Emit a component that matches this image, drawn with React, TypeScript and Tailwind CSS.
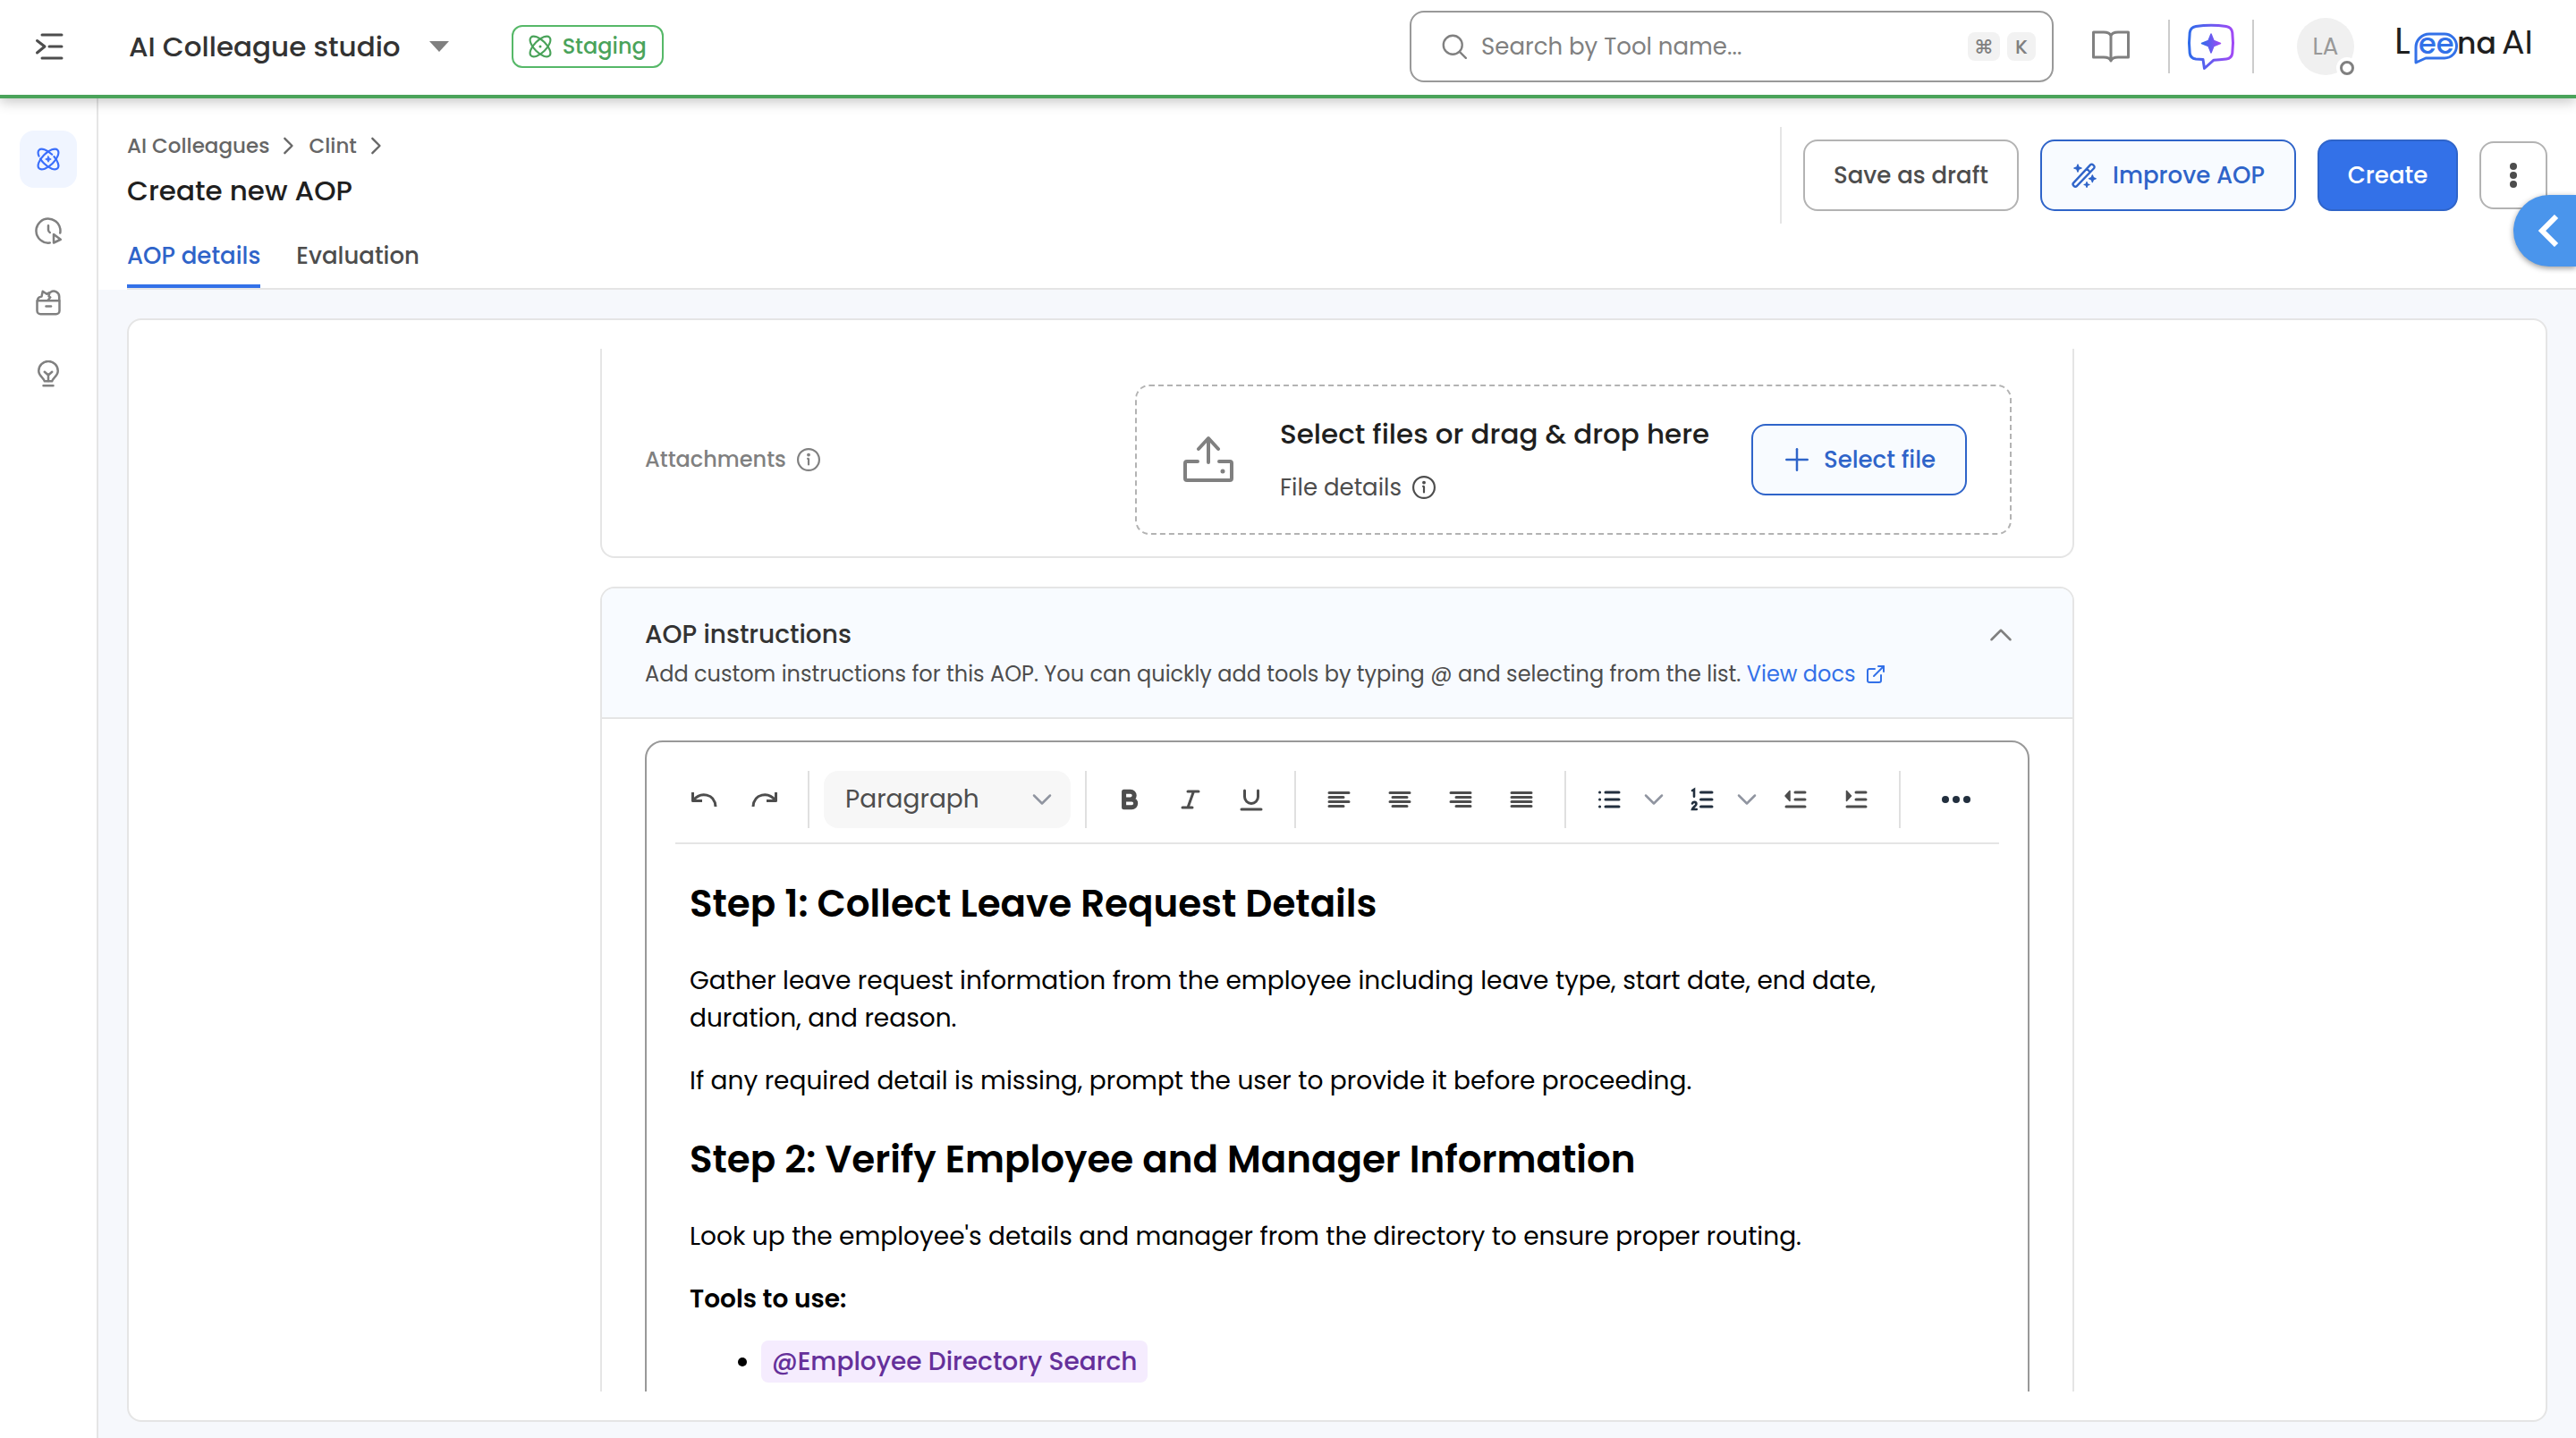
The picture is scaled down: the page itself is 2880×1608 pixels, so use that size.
import type { ReactNode } from 'react';
import { ExternalLink, Plus } from 'lucide-react';

type IconProps = { className?: string };

function Stroke({ className, width = 2, children }: IconProps & { width?: number; children: ReactNode }) {
  return (
    <svg
      className={className}
      viewBox="0 0 24 24"
      fill="none"
      stroke="currentColor"
      strokeWidth={width}
      strokeLinecap="round"
      strokeLinejoin="round"
      aria-hidden="true"
    >
      {children}
    </svg>
  );
}

function AtomIcon({ className, spark }: IconProps & { spark?: boolean }) {
  return (
    <Stroke className={className} width={2}>
      <ellipse cx="12" cy="12" rx="13.5" ry="6.2" transform="rotate(45 12 12)" strokeDasharray={spark ? '22 3' : undefined} />
      <ellipse cx="12" cy="12" rx="13.5" ry="6.2" transform="rotate(-45 12 12)" />
      {spark ? (
        <path d="M12 9l1 2 2 1-2 1-1 2-1-2-2-1 2-1z" fill="currentColor" strokeWidth="0.8" />
      ) : (
        <circle cx="12" cy="12" r="1.4" fill="currentColor" stroke="none" />
      )}
    </Stroke>
  );
}

function HistoryIcon({ className }: IconProps) {
  return (
    <Stroke className={className}>
      <path d="M22.6 14A10.8 10.8 0 1 0 13.4 22.8" />
      <path d="M12 7.4v3.8a3 3 0 0 0 1.4 2.4" />
      <path d="M16.8 15.2v7.6l6.2-3z" />
    </Stroke>
  );
}

function ToolboxIcon({ className }: IconProps) {
  return (
    <Stroke className={className}>
      <path d="M2 10.5h20v9a3 3 0 0 1-3 3H5a3 3 0 0 1-3-3z" />
      <path d="M10 15.5h4.4" />
      <path d="M2.4 10.2c.2-2.4 1.4-3 3.6-3.4l1-4.6 3.6 2.4 2.6-1.2-.8 3.2 1.4 1-2.2 2.6" />
      <path d="M14 3a5 5 0 0 1 7.8 4.2v3" />
    </Stroke>
  );
}

function IdeaIcon({ className }: IconProps) {
  return (
    <Stroke className={className}>
      <path d="M8.6 18.6c0-2.6-5.2-4.4-5.2-9.2a8.6 8.6 0 0 1 17.2 0c0 4.8-5.2 6.6-5.2 9.2z" />
      <path d="M12 18.4v-5.6M8.6 10.2l3.4 3 3.4-3M7.6 22.6h8.8" />
    </Stroke>
  );
}

function ChevronIcon({ className, d, width = 2 }: IconProps & { d: string; width?: number }) {
  return (
    <Stroke className={className} width={width}>
      <path d={d} />
    </Stroke>
  );
}

const right = 'M8 5l7 7-7 7';
const down = 'M3 7.5l9 9 9-9';
const up = 'M3 16.5l9-9 9 9';

function InfoIcon({ className }: IconProps) {
  return (
    <Stroke className={className} width={2}>
      <circle cx="12" cy="12" r="11" />
      <path d="M11.2 11c1.2 0 .8 1 .8 2.4V17" />
      <circle cx="12" cy="7" r="0.8" fill="currentColor" />
    </Stroke>
  );
}

function WandIcon({ className }: IconProps) {
  return (
    <Stroke className={className} width={2}>
      <path d="M1.8 19.4L18 2a1.8 1.8 0 0 1 2.6 0l.8.8a1.8 1.8 0 0 1 0 2.6L5 22.4a1.8 1.8 0 0 1-2.6 0l-.6-.6a1.8 1.8 0 0 1 0-2.4zM14.6 5.6l3.2 3.4" />
      <path
        d="M6 1.6l1 2.6 2.6 1L7 6.2l-1 2.6-1-2.6-2.6-1 2.6-1zM20 11.8l1 2.4 2.4 1-2.4 1-1 2.4-1-2.4-2.4-1 2.4-1zM14.6 18.4l.7 1.9 1.9.7-1.9.7-.7 1.9-.7-1.9-1.9-.7 1.9-.7z"
        fill="currentColor"
        strokeWidth="1"
      />
    </Stroke>
  );
}

function UploadIcon({ className }: IconProps) {
  return (
    <svg className={className} viewBox="0 0 60 54" fill="none" stroke="currentColor" strokeWidth="4" strokeLinecap="round" strokeLinejoin="round" aria-hidden="true">
      <path d="M18 29H6a2 2 0 0 0-2 2v17a2 2 0 0 0 2 2h48a2 2 0 0 0 2-2V31a2 2 0 0 0-2-2H42" />
      <path d="M30 30V4M19 15L30 3l11 12" />
      <circle cx="46" cy="40" r="1.5" fill="currentColor" strokeWidth="2" />
    </svg>
  );
}

function ChatSparkIcon({ className }: IconProps) {
  return (
    <svg className={className} viewBox="0 0 56 54" fill="none" aria-hidden="true">
      <defs>
        <linearGradient id="chat-spark" x1="0" y1="0" x2="1" y2="0">
          <stop offset="0" stopColor="#2f6bea" />
          <stop offset="1" stopColor="#a04af5" />
        </linearGradient>
      </defs>
      <path
        d="M11 4.5C22 2.8 34 2.8 45 4.5c4 .7 6.3 3 6.8 7 1 8 1 15 0 23-.5 4-2.8 6-6.8 6.5-5 .6-9 1-14 1.2L20.5 51.5l-1.500-10-8-.5c-4-.5-6.300-2.500-6.800-6.500-1-8-1-15 0-23 .5-4 2.800-6.300 6.800-7z"
        stroke="url(#chat-spark)"
        strokeWidth="3"
        strokeLinejoin="round"
      />
      <path d="M28 13l3 7.5 7.5 3-7.5 3L28 34l-3-7.5-7.5-3 7.5-3z" fill="url(#chat-spark)" stroke="url(#chat-spark)" strokeWidth="1.5" strokeLinejoin="round" />
    </svg>
  );
}

function BookIcon({ className }: IconProps) {
  return (
    <svg className={className} viewBox="0 0 44 38" fill="none" stroke="currentColor" strokeWidth="3" strokeLinejoin="round" aria-hidden="true">
      <path d="M22 7C21 4 18 3 14 3H2.5v28H14c4 0 7 1 8 4 1-3 4-4 8-4h11.5V3H30c-4 0-7 1-8 4zM22 7v28" />
    </svg>
  );
}

function Logo() {
  return (
    <svg className="h-[72px] w-[158px] overflow-visible" viewBox="0 0 158 72" role="img" aria-label="Leena AI" fontFamily="Poppins, Inter, sans-serif">
      <text x="1" y="44" fontSize="41" fontWeight="400" fill="#1f1f1f">L</text>
      <path d="M25 54V37a15 15 0 0 1 15-15h17a13 13 0 0 1 0 27H36z" fill="none" stroke="#3371e8" strokeWidth="3" strokeLinejoin="round" />
      <text x="28" y="44" fontSize="32" fontWeight="500" fill="#3371e8">ee</text>
      <text x="71" y="44" fontSize="33" fontWeight="500" fill="#1f1f1f">na</text>
      <text x="121" y="44" fontSize="38" fontWeight="400" fill="#1f1f1f">AI</text>
    </svg>
  );
}

function Header() {
  return (
    <header className="relative z-10 flex h-[110px] shrink-0 items-center border-b-4 border-[#4aa35a] bg-white pr-[46px] pb-0.5 shadow-[0_3px_14px_rgba(0,0,0,0.25)]">
      <button type="button" aria-label="Expand menu" className="flex w-[110px] shrink-0 justify-center text-[#4d4d4d]">
        <svg className="h-8 w-8" viewBox="0 0 32 32" fill="none" stroke="currentColor" strokeWidth="3" strokeLinecap="round" strokeLinejoin="round" aria-hidden="true">
          <path d="M8 3h22M16 16h14M8 29h22M2.5 9.5L11 16l-8.5 7" />
        </svg>
      </button>
      <button type="button" className="ml-[34px] flex items-center gap-8 text-[31px] font-medium text-[#333]">
        AI Colleague studio
        <svg className="h-3 w-[22px] text-[#808080]" viewBox="0 0 22 12" fill="currentColor" aria-hidden="true">
          <path d="M0 0h22L11 12z" />
        </svg>
      </button>
      <div className="ml-[70px] flex h-12 items-center gap-3 rounded-xl border-2 border-[#56b868] px-[17px] text-2xl font-medium text-[#4aa35a]">
        <AtomIcon className="size-[26px] overflow-visible" />
        Staging
      </div>

      <label className="ml-auto flex h-20 w-[720px] items-center gap-4 rounded-2xl border-2 border-[#999] pr-[18px] pl-[34px]">
        <Stroke className="size-7 text-[#808080]">
          <circle cx="10.5" cy="10.5" r="9" />
          <path d="M17 17l6 6" />
        </Stroke>
        <input
          type="search"
          aria-label="Search tools"
          placeholder="Search by Tool name..."
          className="min-w-0 flex-1 text-[26px] outline-none placeholder:text-[#808080]"
        />
        <span className="flex gap-2 text-[22px] font-medium text-[#808080]">
          <kbd className="flex h-8 w-9 items-center justify-center rounded-lg bg-[#f2f2f2] font-[Inter,sans-serif]">⌘</kbd>
          <kbd className="flex h-8 w-8 items-center justify-center rounded-lg bg-[#f2f2f2] font-[Poppins,Inter,sans-serif]">K</kbd>
        </span>
      </label>

      <button type="button" aria-label="Documentation" className="ml-[42px] text-[#808080]">
        <BookIcon className="h-[38px] w-11" />
      </button>
      <div className="ml-[42px] flex h-[60px] items-center border-x-2 border-[#ccc] px-[18px]">
        <button type="button" aria-label="Assistant">
          <ChatSparkIcon className="h-[54px] w-14" />
        </button>
      </div>
      <button type="button" aria-label="Account" className="relative ml-12 flex size-16 items-center justify-center rounded-full bg-[#f0f0f0] text-[26px] text-[#999]">
        LA
        <span className="absolute -right-1 -bottom-1 size-6 rounded-full border-4 border-white bg-white">
          <span className="block size-4 rounded-full border-[3px] border-[#808080]" />
        </span>
      </button>
      <div className="ml-11">
        <Logo />
      </div>
    </header>
  );
}

const navItems = [
  { label: 'AI Colleagues', icon: <AtomIcon spark className="size-[26px] overflow-visible" /> },
  { label: 'Runs', icon: <HistoryIcon className="size-[30px]" /> },
  { label: 'Tools', icon: <ToolboxIcon className="size-[30px]" /> },
  { label: 'Insights', icon: <IdeaIcon className="size-[30px]" /> },
];

function Sidebar() {
  return (
    <nav className="flex w-[110px] shrink-0 flex-col items-center gap-4 border-r-2 border-[#e5e5e5] bg-white pt-9">
      {navItems.map((item, index) => (
        <a
          key={item.label}
          href="#"
          aria-label={item.label}
          className={`flex size-16 items-center justify-center rounded-2xl ${index === 0 ? 'bg-[#f0f5ff] text-[#3b6ffb]' : 'text-[#808080]'}`}
        >
          {item.icon}
        </a>
      ))}
    </nav>
  );
}

function PageHeader() {
  return (
    <div className="bg-white pl-8">
      <div className="flex h-[214px] items-start border-b-2 border-[#e5e5e5] pr-8">
        <div className="flex h-full flex-col pt-9">
          <div className="flex h-[34px] items-center text-[23px] font-medium text-[#666]">
            <a href="#">AI Colleagues</a>
            <ChevronIcon className="mx-2 size-7" d={right} />
            <a href="#">Clint</a>
            <ChevronIcon className="mx-2 size-7" d={right} />
          </div>
          <h1 className="mt-2 text-[31px] leading-[50px] font-medium text-[#1f1f1f]">Create new AOP</h1>
          <div className="mt-auto flex gap-10 text-[26px] leading-[40px] font-medium">
            <button type="button" className="border-b-4 border-[#3371e8] pb-3 text-[#2f64c9]">AOP details</button>
            <button type="button" className="border-b-4 border-transparent pb-3 text-[#4d4d4d]">Evaluation</button>
          </div>
        </div>

        <div className="mt-8 ml-auto flex h-[108px] items-center gap-6 border-l-2 border-[#e5e5e5] pl-6 text-[26px] font-medium whitespace-nowrap">
          <button type="button" className="h-20 w-[241px] rounded-2xl border-2 border-[#b3b3b3] text-[#4d4d4d]">Save as draft</button>
          <button type="button" className="flex h-20 w-[286px] items-center justify-center gap-[18px] rounded-2xl border-2 border-[#2f64c9] bg-[#f8fbff] text-[#2f64c9]">
            <WandIcon className="size-7" />
            Improve AOP
          </button>
          <button type="button" className="h-20 w-[157px] rounded-2xl border-2 border-[#2f64c9] bg-[#3371e8] text-white">Create</button>
          <button type="button" aria-label="More actions" className="flex size-[76px] items-center justify-center rounded-2xl border-2 border-[#b3b3b3] text-[#4d4d4d]">
            <svg className="h-7 w-2" viewBox="0 0 8 28" fill="currentColor" aria-hidden="true">
              <circle cx="4" cy="4" r="4" />
              <circle cx="4" cy="14" r="4" />
              <circle cx="4" cy="24" r="4" />
            </svg>
          </button>
        </div>
      </div>
    </div>
  );
}

function AttachmentsCard() {
  return (
    <section className="flex shrink-0 items-center justify-between rounded-b-2xl border-x-2 border-b-2 border-[#e5e5e5] pt-10 pr-[68px] pb-6 pl-12">
      <div className="flex items-center gap-3 text-2xl font-medium text-[#808080]">
        Attachments
        <InfoIcon className="size-[26px]" />
      </div>
      <div className="flex h-[168px] w-[980px] items-center rounded-2xl border-2 border-dashed border-[#b3b3b3] pr-12 pl-[50px]">
        <UploadIcon className="h-[54px] w-[60px] text-[#808080]" />
        <div className="ml-[50px]">
          <div className="text-[31px] leading-[46px] font-medium text-[#1f1f1f]">Select files or drag &amp; drop here</div>
          <div className="mt-4 flex items-center gap-3 text-[26px] leading-[42px] text-[#4d4d4d]">
            File details
            <InfoIcon className="size-[26px]" />
          </div>
        </div>
        <button type="button" className="ml-auto flex h-20 w-[241px] items-center justify-center gap-2.5 rounded-2xl border-2 border-[#2f64c9] bg-[#f8fbff] pr-1 text-[26px] font-medium text-[#2f64c9]">
          <Plus className="size-10" strokeWidth={1.5} />
          Select file
        </button>
      </div>
    </section>
  );
}

function ToolButton({ label, dark, children }: { label: string; dark?: boolean; children: ReactNode }) {
  return (
    <button type="button" aria-label={label} className={`flex h-16 w-[68px] items-center justify-center ${dark ? 'text-[#222f3e]' : 'text-[#4d4d4d]'}`}>
      {children}
    </button>
  );
}

function MenuArrow({ label }: { label: string }) {
  return (
    <button type="button" aria-label={label} className="flex h-16 w-9 items-center justify-center pr-1 text-[#9095a0]">
      <ChevronIcon className="size-6" d={down} width={2.5} />
    </button>
  );
}

function Lines({ d, children }: { d: string; children?: ReactNode }) {
  return (
    <svg className="h-7 w-[26px]" viewBox="0 0 26 28" fill="none" stroke="currentColor" strokeWidth="3" strokeLinecap="round" aria-hidden="true">
      <path d={d} />
      {children}
    </svg>
  );
}

function Toolbar() {
  const divider = <div className="h-16 w-0.5 shrink-0 bg-[#e0e0e0]" />;

  return (
    <div className="flex items-center gap-[14px] border-b-2 border-[#e5e5e5] pb-4">
      <div className="-ml-0.5 flex">
        <ToolButton label="Undo">
          <svg className="h-4 w-[30px]" viewBox="0 0 30 16" fill="none" stroke="currentColor" strokeWidth="3" strokeLinejoin="round" aria-hidden="true">
            <path d="M2.5 0v9.5H13M3 9C11-1 27 1 28 16" />
          </svg>
        </ToolButton>
        <ToolButton label="Redo">
          <svg className="h-4 w-[30px]" viewBox="0 0 30 16" fill="none" stroke="currentColor" strokeWidth="3" strokeLinejoin="round" aria-hidden="true">
            <path d="M27.5 0v9.5H17M27 9C19-1 3 1 2 16" />
          </svg>
        </ToolButton>
      </div>
      {divider}
      <div className="relative mx-0.5">
        <select aria-label="Block format" className="h-16 w-[276px] appearance-none rounded-2xl bg-[#f7f7f7] pl-6 text-[28px] text-[#4d4d4d]">
          <option>Paragraph</option>
        </select>
        <ChevronIcon className="pointer-events-none absolute top-5 right-5 size-6 text-[#9095a0]" d={down} width={2.5} />
      </div>
      {divider}
      <div className="flex">
        <ToolButton label="Bold">
          <svg className="h-[26px] w-[22px]" viewBox="0 0 24 28" fill="none" stroke="currentColor" strokeWidth="5.5" strokeLinejoin="round" aria-hidden="true">
            <path d="M5 4.5h8a4.7 4.7 0 0 1 0 9.4H5zM5 13.9h9.5a4.8 4.8 0 0 1 0 9.6H5z" />
          </svg>
        </ToolButton>
        <ToolButton label="Italic">
          <Lines d="M10 5h12M4 23h11M16.5 5l-6.500 18" />
        </ToolButton>
        <ToolButton label="Underline">
          <Lines d="M5.5 4v7a7.5 7.5 0 0 0 15 0V4M2 25h22" />
        </ToolButton>
      </div>
      {divider}
      <div className="flex">
        <ToolButton label="Align left">
          <Lines d="M2 6.5h22M2 11.5h16M2 16.5h22M2 21.5h16" />
        </ToolButton>
        <ToolButton label="Align center">
          <Lines d="M2 6.5h22M5 11.5h16M2 16.5h22M5 21.5h16" />
        </ToolButton>
        <ToolButton label="Align right">
          <Lines d="M2 6.5h22M8 11.5h16M2 16.5h22M8 21.5h16" />
        </ToolButton>
        <ToolButton label="Justify">
          <Lines d="M2 6.5h22M2 11.5h22M2 16.5h22M2 21.5h22" />
        </ToolButton>
      </div>
      {divider}
      <div className="flex">
        <ToolButton label="Bullet list" dark>
          <Lines d="M9 6h15M9 14h15M9 22h15M2.5 6h.1M2.5 14h.1M2.5 22h.1" />
        </ToolButton>
        <MenuArrow label="Bullet list styles" />
        <ToolButton label="Numbered list" dark>
          <svg className="h-8 w-[26px]" viewBox="0 0 26 32" fill="none" stroke="currentColor" strokeWidth="3" strokeLinecap="round" aria-hidden="true">
            <path d="M11.5 8H24M11.5 16H24M11.5 24H24" />
            <path d="M2 6l2-1.200v8M2 20.500c.6-2.400 4.500-2 4.500.4 0 2-3.800 3.400-4.500 6.100h4.800" strokeWidth="2.600" />
          </svg>
        </ToolButton>
        <MenuArrow label="Numbered list styles" />
        <ToolButton label="Decrease indent">
          <Lines d="M13 6h11M13 14h11M3 22h21">
            <path d="M7 4.5v11L2 10z" fill="currentColor" strokeWidth="1.5" strokeLinejoin="round" />
          </Lines>
        </ToolButton>
        <ToolButton label="Increase indent">
          <Lines d="M13 6h11M13 14h11M3 22h21">
            <path d="M2.5 4.5v11l5-5.500z" fill="currentColor" strokeWidth="1.5" strokeLinejoin="round" />
          </Lines>
        </ToolButton>
      </div>
      {divider}
      <div className="px-[14px]">
        <ToolButton label="More" dark>
          <svg className="h-2 w-8" viewBox="0 0 32 8" fill="currentColor" aria-hidden="true">
            <circle cx="4" cy="4" r="4" />
            <circle cx="16" cy="4" r="4" />
            <circle cx="28" cy="4" r="4" />
          </svg>
        </ToolButton>
      </div>
    </div>
  );
}

function Editor() {
  return (
    <div className="rounded-t-[20px] border-2 border-[#999] px-8 pt-8">
      <Toolbar />
      <div className="px-4 pt-[35px] text-[28px] leading-[42px] text-black">
        <h2 className="text-[42px] leading-[63px] font-semibold">Step 1: Collect Leave Request Details</h2>
        <p className="mt-[34px]">
          Gather leave request information from the employee including leave type, start date, end date, duration, and reason.
        </p>
        <p className="mt-7">If any required detail is missing, prompt the user to provide it before proceeding.</p>
        <h2 className="mt-[35px] text-[42px] leading-[63px] font-semibold">Step 2: Verify Employee and Manager Information</h2>
        <p className="mt-[34px]">Look up the employee's details and manager from the directory to ensure proper routing.</p>
        <p className="mt-7 font-semibold">Tools to use:</p>
        <ul className="my-7 list-disc pl-20">
          <li>
            <span className="rounded-lg bg-[#f5ecfe] px-3 py-1 font-medium text-[#65309a]">@Employee Directory Search</span>
          </li>
        </ul>
      </div>
    </div>
  );
}

function InstructionsCard() {
  return (
    <section className="mt-8 shrink-0 overflow-hidden rounded-t-2xl border-2 border-[#e5e5e5]">
      <div className="flex h-[146px] items-start justify-between border-b-2 border-[#e5e5e5] bg-[#f8fbff] pt-[30px] pr-[66px] pl-12">
        <div>
          <h3 className="text-[28px] leading-[44px] font-medium text-[#333]">AOP instructions</h3>
          <p className="mt-0.5 text-2xl leading-[40px] text-[#4d4d4d]">
            Add custom instructions for this AOP. You can quickly add tools by typing @ and selecting from the list.{' '}
            <a href="#" className="inline-flex items-center gap-2.5 text-[#3371e8]">
              View docs
              <ExternalLink className="size-6" strokeWidth={2} />
            </a>
          </p>
        </div>
        <button type="button" aria-label="Collapse section" className="mt-2 text-[#808080]">
          <ChevronIcon className="size-7" d={up} width={2.2} />
        </button>
      </div>
      <div className="px-12 pt-6">
        <Editor />
      </div>
    </section>
  );
}

export default function App() {
  return (
    <div className="flex h-screen flex-col overflow-hidden bg-[#f6f8fc] font-[Poppins,Inter,sans-serif] text-[#333]">
      <Header />
      <div className="flex min-h-0 flex-1">
        <Sidebar />
        <div className="relative flex min-w-0 flex-1 flex-col">
          <PageHeader />
          <button
            type="button"
            aria-label="Open side panel"
            className="absolute top-[108px] right-0 flex h-20 w-[70px] items-center justify-center rounded-l-full bg-[#4a95ec] pl-2 text-white shadow-[0_2px_6px_rgba(0,0,0,0.4)]"
          >
            <svg className="h-9 w-6" viewBox="0 0 24 36" fill="none" stroke="currentColor" strokeWidth="6" aria-hidden="true">
              <path d="M21 2L5 18l16 16" />
            </svg>
          </button>

          <main className="flex min-h-0 flex-1 flex-col px-8 pt-8 pb-[18px]">
            <div className="flex min-h-0 flex-1 flex-col rounded-2xl border-2 border-[#e5e5e5] bg-white p-8">
              {/* scroll area */}
              <div className="mx-auto flex min-h-0 w-full max-w-[1648px] flex-1 flex-col overflow-hidden">
                <AttachmentsCard />
                <InstructionsCard />
              </div>
            </div>
          </main>
        </div>
      </div>
    </div>
  );
}
